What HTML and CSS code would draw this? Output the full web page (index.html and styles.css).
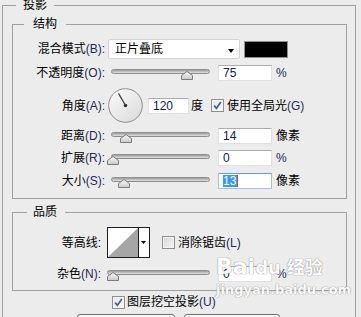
FILE: index.html
```html
<!DOCTYPE html>
<html lang="zh">
<head>
<meta charset="utf-8">
<link rel="stylesheet" href="styles.css">
</head>
<body>
<svg class="defs" width="0" height="0" aria-hidden="true">
  <defs>
    <linearGradient id="tg" x1="0" y1="0" x2="0" y2="1">
      <stop offset="0" stop-color="#fafafa"/>
      <stop offset="1" stop-color="#c9c9c9"/>
    </linearGradient>
    <linearGradient id="dg" x1="0" y1="0" x2="1" y2="1">
      <stop offset="0" stop-color="#fbfbfb"/>
      <stop offset="1" stop-color="#d9d9d9"/>
    </linearGradient>
  </defs>
</svg>

<fieldset class="group outer">
  <legend class="lg-outer">投影</legend>

  <fieldset class="group struct">
    <legend class="lg-struct">结构</legend>

    <div class="row row-blend">
      <span class="lbl">混合模式<span class="k">(B):</span></span>
      <div class="select">正片叠底<span class="sel-arrow"></span></div>
      <span class="swatch"></span>
    </div>

    <div class="row gap6">
      <span class="lbl">不透明度<span class="k">(O):</span></span>
      <div class="slider"><svg class="thumb" style="left:69px" width="12" height="9" viewBox="0 0 12 9"><path d="M6 .5 11.5 4.5V8.5H.5V4.5Z" fill="url(#tg)" stroke="#7c7c7c"/></svg></div>
      <div class="input">75</div>
      <span class="unit k">%</span>
    </div>

    <div class="row row-angle gap7">
      <span class="lbl">角度<span class="k">(A):</span></span>
      <svg class="dial" width="35" height="35" viewBox="0 0 35 35">
        <circle cx="17.5" cy="17.5" r="16.8" fill="url(#dg)" stroke="#8c8c8c"/>
        <line x1="17.5" y1="17.5" x2="10.5" y2="5.4" stroke="#3a3a3a" stroke-width="1.2"/>
        <circle cx="17.5" cy="17.5" r="1.8" fill="#333"/>
      </svg>
      <div class="input small">120</div>
      <span class="unit deg">度</span>
      <span class="check on ck-angle"><svg width="9" height="9" viewBox="0 0 9 9"><path d="M1.2 4.6 3.4 7.4 7.8 1" fill="none" stroke="#4a5d8c" stroke-width="1.7"/></svg></span>
      <span class="ck-text">使用全局光<span class="k">(G)</span></span>
    </div>

    <div class="row gap5">
      <span class="lbl">距离<span class="k">(D):</span></span>
      <div class="slider"><svg class="thumb" style="left:8px" width="12" height="9" viewBox="0 0 12 9"><path d="M6 .5 11.5 4.5V8.5H.5V4.5Z" fill="url(#tg)" stroke="#7c7c7c"/></svg></div>
      <div class="input">14</div>
      <span class="unit">像素</span>
    </div>

    <div class="row gap6">
      <span class="lbl">扩展<span class="k">(R):</span></span>
      <div class="slider"><svg class="thumb" style="left:-5px" width="12" height="9" viewBox="0 0 12 9"><path d="M6 .5 11.5 4.5V8.5H.5V4.5Z" fill="url(#tg)" stroke="#7c7c7c"/></svg></div>
      <div class="input">0</div>
      <span class="unit k">%</span>
    </div>

    <div class="row gap7">
      <span class="lbl">大小<span class="k">(S):</span></span>
      <div class="slider"><svg class="thumb" style="left:6px" width="12" height="9" viewBox="0 0 12 9"><path d="M6 .5 11.5 4.5V8.5H.5V4.5Z" fill="url(#tg)" stroke="#7c7c7c"/></svg></div>
      <div class="input focus"><span class="sel">13</span><span class="caret"></span></div>
      <span class="unit">像素</span>
    </div>
  </fieldset>

  <fieldset class="group quality">
    <legend class="lg-quality">品质</legend>

    <div class="row row-contour">
      <span class="lbl q">等高线:</span>
      <svg class="contour" width="43" height="31" viewBox="0 0 43 31">
        <rect x=".5" y=".5" width="42" height="30" fill="#fff" stroke="#1e1e1e"/>
        <polygon points="1,30 31,1 31,30" fill="#a6a6a6"/>
        <line x1="31.5" y1="0" x2="31.5" y2="31" stroke="#1e1e1e"/>
        <polygon points="34,14 39,14 36.5,17" fill="#000"/>
      </svg>
      <span class="check ck-aa"></span>
      <span class="ck-text">消除锯齿<span class="k">(L)</span></span>
    </div>

    <div class="row gap8">
      <span class="lbl q">杂色<span class="k">(N):</span></span>
      <div class="slider noise"><svg class="thumb" style="left:-1px" width="12" height="9" viewBox="0 0 12 9"><path d="M6 .5 11.5 4.5V8.5H.5V4.5Z" fill="url(#tg)" stroke="#7c7c7c"/></svg></div>
      <div class="input">0</div>
      <span class="unit k">%</span>
    </div>
  </fieldset>

  <div class="row knock">
    <span class="check on"><svg width="9" height="9" viewBox="0 0 9 9"><path d="M1.2 4.6 3.4 7.4 7.8 1" fill="none" stroke="#4a5d8c" stroke-width="1.7"/></svg></span>
    <span class="ck-text">图层挖空投影<span class="k">(U)</span></span>
  </div>

  <div class="buttons">
    <button class="btn b1">设置为默认值</button>
    <button class="btn b2">复位为默认值</button>
  </div>
</fieldset>

<div class="watermark">
  <div class="wm-top"><span class="wm-bai">Bai</span><span class="wm-paw">du</span><span class="wm-jy">经验</span></div>
  <div class="wm-url">jingyan.baidu.com</div>
</div>
</body>
</html>
```

FILE: styles.css
```css
* { box-sizing: border-box; }
html, body { margin: 0; padding: 0; }
body {
  width: 361px;
  height: 317px;
  overflow: hidden;
  position: relative;
  background: #ececec;
  color: #000;
  font-family: "Liberation Sans", "Noto Sans CJK SC", sans-serif;
  font-size: 12px;
  line-height: 16px;
}
.defs { position: absolute; }

.group {
  border: 1px solid #a0a0a0;
  margin: 0;
  padding: 0;
  min-width: 0;
}
.group > legend {
  line-height: 15px;
  height: 15px;
  font-size: 12px;
}

.outer {
  margin: -2px 5px 0 2px;
  padding: 4px 8px 0 9px;
  height: 360px;
}
.lg-outer { margin-left: 4px; padding: 0 7px; }

.struct { padding: 7px 0 9px 0; }
.lg-struct { margin-left: 11px; padding: 0 9px; }

.quality { margin-top: 6px; padding: 7px 0 8px 0; }
.lg-quality { margin-left: 14px; padding: 0 8px 0 6px; }

.k { color: #1c2a58; }

.row {
  display: flex;
  align-items: center;
  height: 16px;
  white-space: nowrap;
}
.gap5 { margin-top: 5px; }
.gap6 { margin-top: 6px; }
.gap7 { margin-top: 7px; }
.gap8 { margin-top: 8px; }
.row-blend { height: 20px; }
.row-angle { height: 35px; }
.row-contour { height: 31px; }

.lbl {
  flex: none;
  width: 92px;
  text-align: right;
}
.lbl.q { width: 88px; }

.select {
  flex: none;
  position: relative;
  margin-left: 3px;
  width: 132px;
  height: 20px;
  padding-left: 6px;
  line-height: 19px;
  background: #fff;
  border: 1px solid #d4d4d4;
  border-radius: 2px;
}
.sel-arrow {
  position: absolute;
  left: 119px;
  top: 9px;
  width: 0;
  height: 0;
  border-left: 3px solid transparent;
  border-right: 3px solid transparent;
  border-top: 4px solid #000;
}
.swatch {
  flex: none;
  margin-left: 4px;
  width: 44px;
  height: 17px;
  background: #000;
  border: 1px solid #8e8e8e;
}

.slider {
  flex: none;
  position: relative;
  align-self: flex-start;
  margin-top: 4px;
  margin-left: 6px;
  width: 99px;
  height: 5px;
  border: 1px solid #8f8f8f;
  border-radius: 3px;
  background: linear-gradient(#9a9a9a, #c6c6c6 60%, #e0e0e0);
}
.slider.noise { width: 103px; }
.thumb {
  position: absolute;
  top: 1px;
  display: block;
}

.input {
  flex: none;
  margin-left: 8px;
  width: 54px;
  height: 16px;
  padding-left: 4px;
  line-height: 14px;
  color: #10204a;
  background: #fff;
  border: 1px solid #dde1e7;
  border-top-color: #abadb3;
}
.input.small { margin-left: 5px; width: 41px; }
.input.focus {
  border-color: #9fc3e8;
  border-top-color: #6a9cd1;
  display: flex;
  align-items: center;
}
.sel {
  background: #3399ff;
  color: #fff;
  line-height: 12px;
  padding: 0 1px 0 0;
}
.caret {
  width: 1px;
  height: 12px;
  background: #b45a1e;
}
.unit { flex: none; margin-left: 4px; }
.unit.deg { margin-left: 2px; }

.dial { flex: none; margin-left: 3px; display: block; }

.check {
  flex: none;
  width: 13px;
  height: 13px;
  border: 1px solid #8e8f8f;
  background: linear-gradient(135deg, #d2d5da, #f7f7f7);
  box-shadow: inset 0 0 0 1px #f4f4f4;
  display: flex;
  align-items: center;
  justify-content: center;
}
.check.on { background: linear-gradient(135deg, #e4e6ea, #fafafa); }
.check svg { display: block; }
.ck-angle { margin-left: 8px; }
.ck-text { margin-left: 3px; }

.contour { flex: none; margin-left: 6px; display: block; }
.ck-aa { margin-left: 12px; }

.knock { margin-top: 3px; padding-left: 100px; }
.knock .ck-text { margin-left: 2px; }

.buttons {
  display: flex;
  margin-top: 4px;
  padding-left: 65px;
}
.btn {
  flex: none;
  height: 22px;
  padding: 0;
  font: inherit;
  color: #000;
  border: 1px solid #707070;
  border-radius: 3px;
  background: linear-gradient(#f2f2f2, #ebebeb 50%, #dddddd 51%, #cfcfcf);
  box-shadow: inset 0 0 0 1px #fcfcfc;
}
.b1 { width: 98px; }
.b2 { width: 96px; margin-left: 9px; }

.watermark {
  position: absolute;
  left: 216px;
  top: 255px;
  color: #fff;
  opacity: 0.9;
  font-family: "DejaVu Sans", "Noto Sans CJK SC", sans-serif;
  text-shadow: 0 0 1px #8a8a8a, 0 0 1px #8a8a8a;
}
.wm-top { display: flex; align-items: flex-end; height: 24px; }
.wm-bai { font-size: 22px; line-height: 24px; font-weight: bold; }
.wm-paw { font-size: 18px; line-height: 22px; font-weight: bold; }
.wm-jy { font-size: 18px; line-height: 22px; margin-left: 6px; font-weight: bold; }
.wm-url { font-size: 13px; line-height: 16px; margin-top: 3px; font-weight: bold; }
```
